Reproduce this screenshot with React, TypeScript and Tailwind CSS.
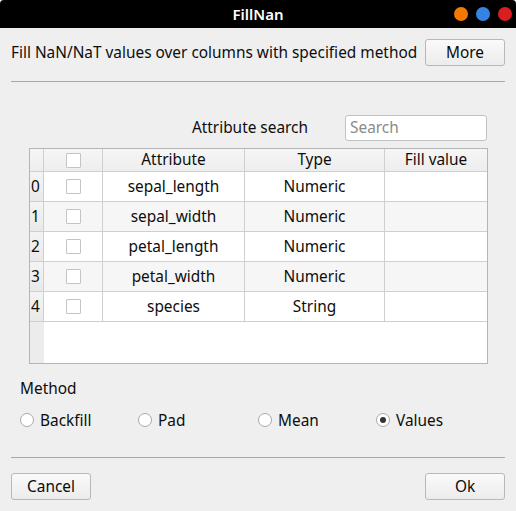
import React from 'react'

const rows = [
  { name: 'sepal_length', type: 'Numeric' },
  { name: 'sepal_width', type: 'Numeric' },
  { name: 'petal_length', type: 'Numeric' },
  { name: 'petal_width', type: 'Numeric' },
  { name: 'species', type: 'String' },
]

const methods = [
  { label: 'Backfill', w: 'w-[118px]' },
  { label: 'Pad', w: 'w-[120px]' },
  { label: 'Mean', w: 'w-[118px]' },
  { label: 'Values', w: 'w-[100px]', checked: true },
]

function Check() {
  return <div className="w-[15px] h-[15px] border border-[#c4c4c4] bg-white rounded-[1px]" />
}

function Button({ children }: { children: React.ReactNode }) {
  return (
    <button className="w-[80px] h-[27px] border border-[#b8b8b8] rounded-[3px] bg-gradient-to-b from-[#fafafa] to-[#ececec] text-[15.4px] text-[#0a0a0a]">
      {children}
    </button>
  )
}

export default function App() {
  return (
    <div
      className="w-[516px] h-[511px] bg-[#efefef] flex flex-col text-[#0d0d0d] text-[15.4px] overflow-hidden"
      style={{ fontFamily: '"Noto Sans", "Open Sans", sans-serif' }}
    >
      {/* title bar */}
      <div className="h-[28px] bg-black rounded-t-[4px] relative flex items-center justify-center shrink-0">
        <span className="text-white text-[15px] font-semibold">FillNan</span>
        <div className="absolute right-[4px] top-[7px] flex gap-[8px]">
          <div className="w-[14px] h-[14px] rounded-full bg-[#f57900]" />
          <div className="w-[14px] h-[14px] rounded-full bg-[#3584e4]" />
          <div className="w-[14px] h-[14px] rounded-full bg-[#d81e1e]" />
        </div>
      </div>

      <div className="flex flex-col px-[11px]">
        <div className="flex items-center justify-between mt-[11px] h-[27px]">
          <span>Fill NaN/NaT values over columns with specified method</span>
          <Button>More</Button>
        </div>
        <div className="h-px bg-[#a8a8a8] mt-[15px]" />

        <div className="flex items-center justify-end gap-[37px] mt-[33px] pr-[18px]">
          <span>Attribute search</span>
          <div className="w-[142px] h-[26px] bg-white border border-[#c2c2c2] rounded-[3px] flex items-center px-[4px]">
            <span className="text-[#8a8a8a]">Search</span>
          </div>
        </div>

        {/* table */}
        <div className="ml-[18px] mt-[7px] w-[459px] h-[216px] border border-[#b5b5b5] bg-white flex flex-col">
          <div className="flex h-[23px] bg-gradient-to-b from-[#f6f6f6] to-[#ededed] border-b border-[#cfcfcf]">
            <div className="w-[14px] border-r border-[#cfcfcf]" />
            <div className="w-[59px] border-r border-[#cfcfcf] flex items-center justify-center">
              <Check />
            </div>
            <div className="w-[142px] border-r border-[#cfcfcf] flex items-center justify-center">Attribute</div>
            <div className="w-[140px] border-r border-[#cfcfcf] flex items-center justify-center">Type</div>
            <div className="flex-1 flex items-center justify-center">Fill value</div>
          </div>
          <div className="flex flex-1">
            <div className="w-[14px] flex flex-col bg-[#ececec]">
              {rows.map((_, i) => (
                <div
                  key={i}
                  className="h-[30px] border-b border-r border-[#cfcfcf] bg-gradient-to-b from-[#f4f4f4] to-[#e9e9e9] flex items-center pl-[1px]"
                >
                  {i}
                </div>
              ))}
            </div>
            <div className="flex-1 flex flex-col">
              {rows.map((r, i) => (
                <div
                  key={r.name}
                  className={`flex h-[30px] border-b border-[#cfcfcf] ${i % 2 === 1 ? 'bg-[#f6f6f6]' : 'bg-white'}`}
                >
                  <div className="w-[59px] border-r border-[#cfcfcf] flex items-center justify-center">
                    <Check />
                  </div>
                  <div className="w-[142px] border-r border-[#cfcfcf] flex items-center justify-center">{r.name}</div>
                  <div className="w-[140px] border-r border-[#cfcfcf] flex items-center justify-center">{r.type}</div>
                  <div className="flex-1" />
                </div>
              ))}
            </div>
          </div>
        </div>

        <div className="mt-[13px] ml-[9px]">Method</div>
        <div className="flex mt-[10px] ml-[9px] h-[20px] items-center">
          {methods.map(m => (
            <div key={m.label} className={`${m.w} flex items-center gap-[6px]`}>
              <div className="w-[14px] h-[14px] rounded-full border border-[#a9a9a9] bg-white flex items-center justify-center">
                {m.checked && <div className="w-[6px] h-[6px] rounded-full bg-[#333]" />}
              </div>
              <span>{m.label}</span>
            </div>
          ))}
        </div>

        <div className="h-px bg-[#a8a8a8] mt-[27px]" />
        <div className="flex justify-between mt-[15px]">
          <Button>Cancel</Button>
          <Button>Ok</Button>
        </div>
      </div>
    </div>
  )
}
